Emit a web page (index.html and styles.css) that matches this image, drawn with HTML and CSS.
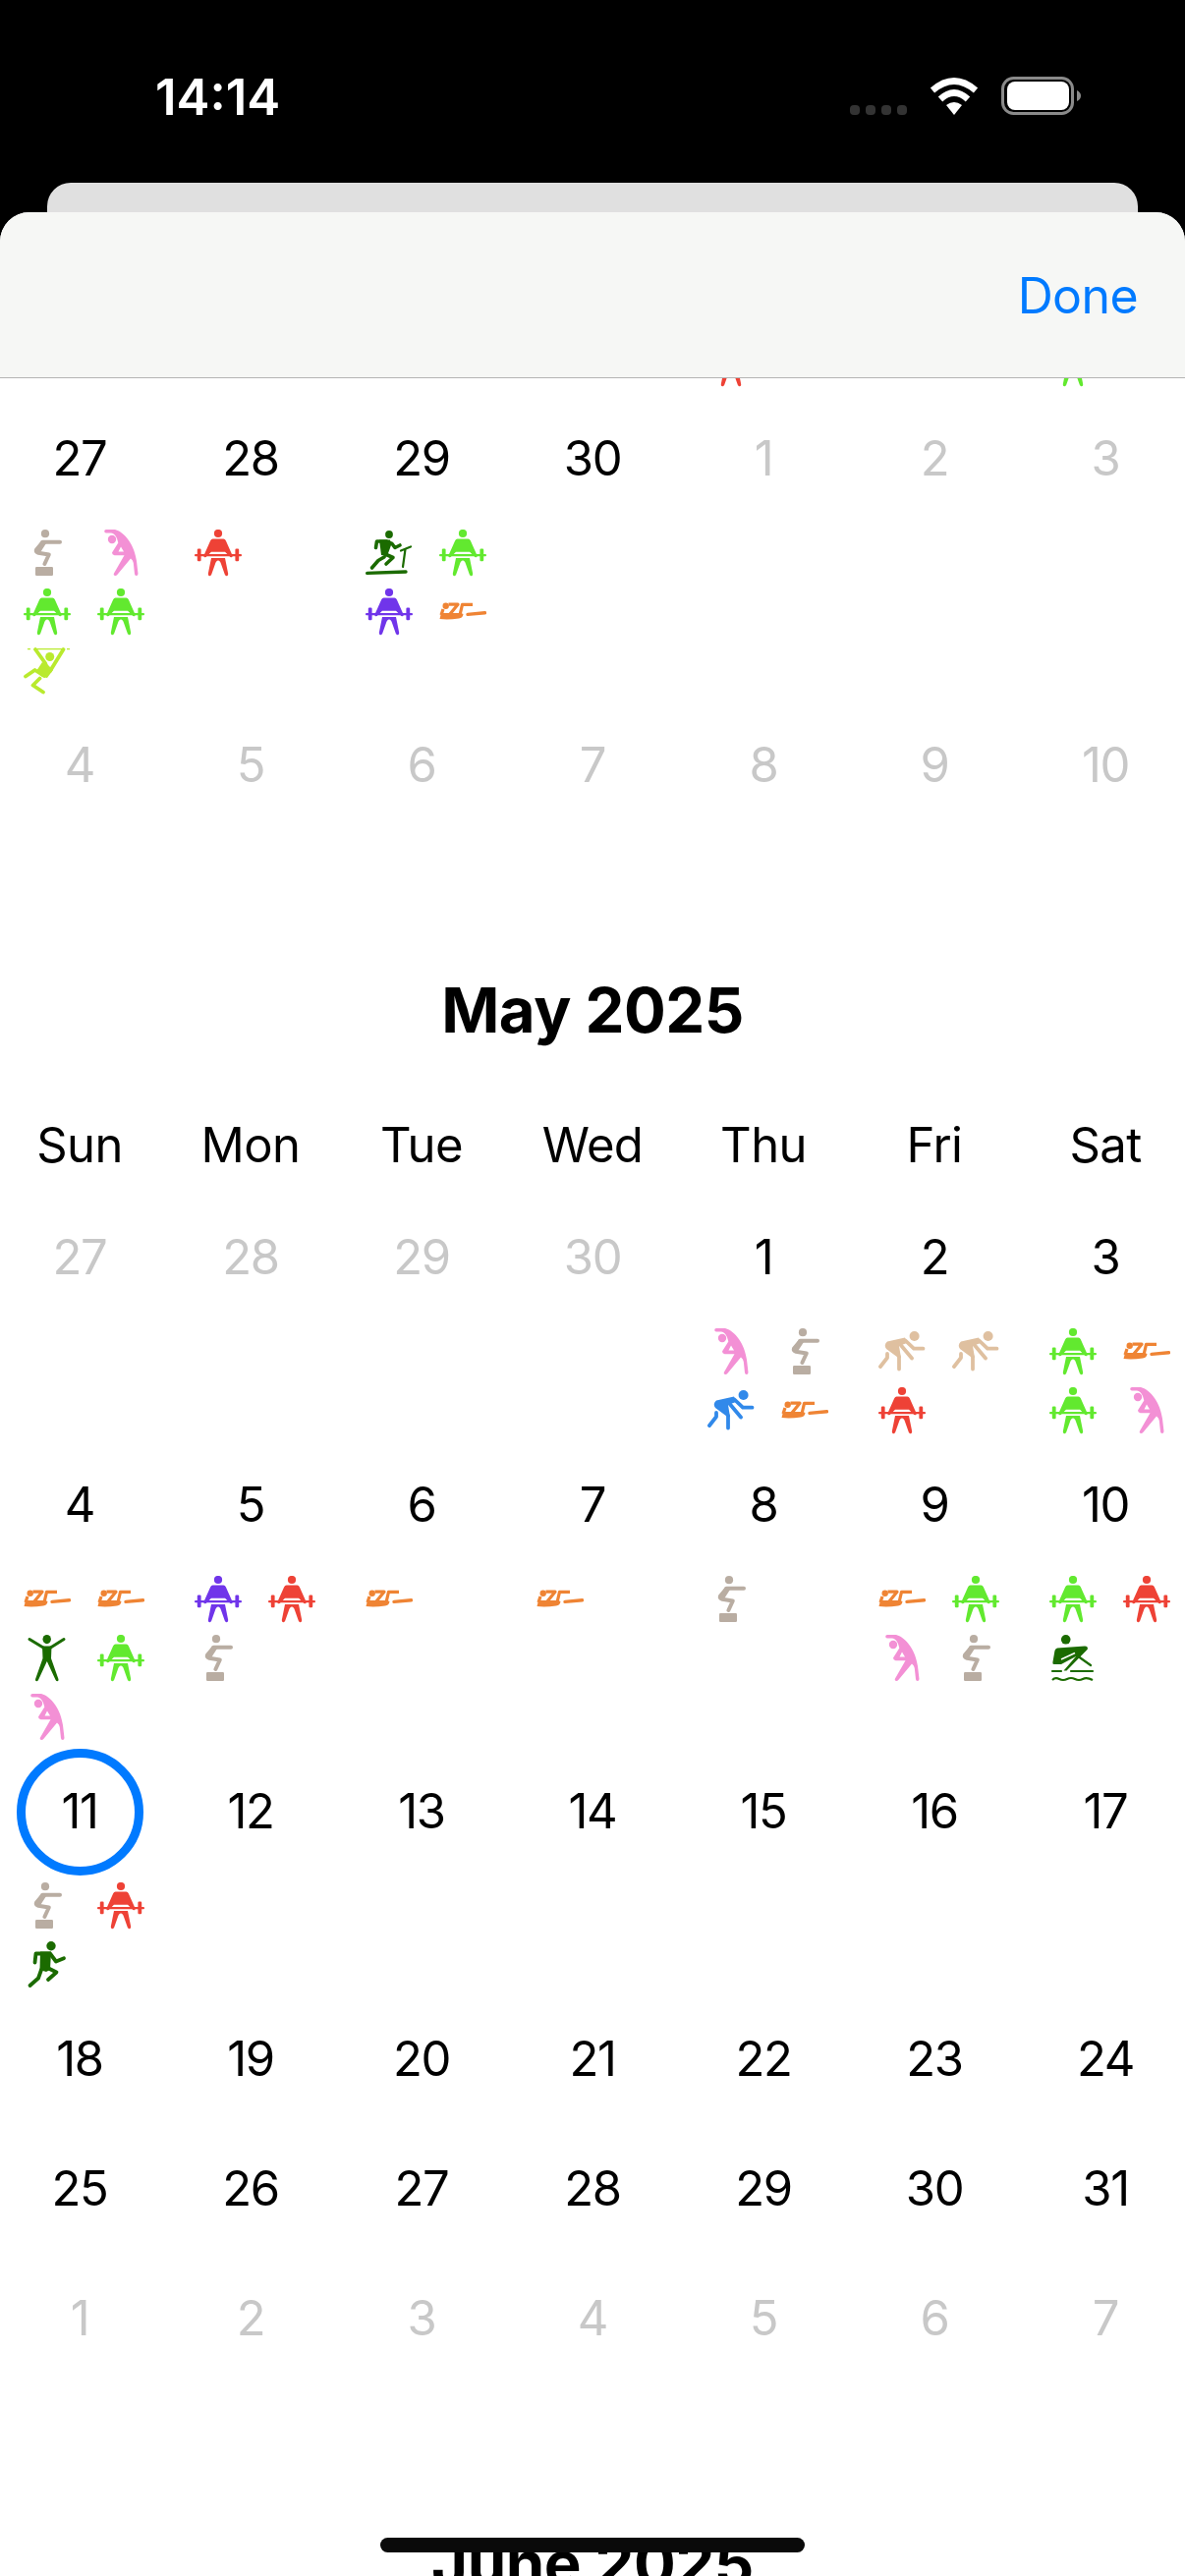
FILE: index.html
```html
<!DOCTYPE html>
<html lang="en">
<head>
<meta charset="utf-8">
<title>Calendar</title>
<link rel="stylesheet" href="styles.css">
</head>
<body>
<svg class="defs" xmlns="http://www.w3.org/2000/svg">
  <symbol id="barbell" viewBox="0 0 48 48">
    <circle cx="24" cy="4" r="4.1" fill="currentColor"/>
    <path d="M18.5 9.6H29.5Q31 9.6 31.8 11.2L38.6 26.4Q39 28 37.5 28.3Q36.2 28.5 35.6 27.2L31 22.8H17L12.4 27.2Q11.8 28.5 10.5 28.3Q9 28 9.4 26.4L16.2 11.2Q17 9.6 18.5 9.6Z" fill="currentColor"/>
    <rect x="0" y="25" width="48" height="2.2" rx="1" fill="currentColor"/>
    <rect x="2.8" y="19.6" width="3.8" height="12.6" rx="1.2" fill="currentColor"/>
    <rect x="41.4" y="19.6" width="3.8" height="12.6" rx="1.2" fill="currentColor"/>
    <path d="M17 29H31L34.2 45Q34.4 47 32.8 47.2Q31.4 47.4 30.8 45.8L27 35Q26 31.5 24 31.5Q22 31.5 21 35L17.2 45.8Q16.6 47.4 15.2 47.2Q13.6 47 13.8 45Z" fill="currentColor"/>
  </symbol>
  <symbol id="stretch" viewBox="0 0 48 48">
    <circle cx="15" cy="10" r="4.2" fill="currentColor"/>
    <path fill-rule="evenodd" d="M9 0H18C29 3 38 17 40 32L41.5 45Q41.5 47 39.7 47Q38.2 47 38 45.2L36.8 34Q36.4 31 34 29.5L20.3 46Q19 47.4 17.5 46.8Q16 46 17 44.4L27.5 26.2H17.5Q15 25.5 15 23.5L21.3 13.5C20 6.5 17 3.6 14 3.4H9Q7.2 3.2 7.2 1.7Q7.2 0 9 0ZM24 17.5L21.5 22.5H27Z" fill="currentColor"/>
  </symbol>
  <symbol id="box" viewBox="0 0 48 48">
    <circle cx="22" cy="4.2" r="4.1" fill="currentColor"/>
    <path d="M37 12.8H19.5L13 20.5Q12 23 15 23.8L25.8 25.5L21.4 35" fill="none" stroke="currentColor" stroke-width="4" stroke-linecap="round" stroke-linejoin="round"/>
    <path d="M18 11L23 14L17.5 22.5L12 22Z" fill="currentColor"/>
    <rect x="12" y="38" width="18" height="9" rx="1.2" fill="currentColor"/>
  </symbol>
  <symbol id="treadmill" viewBox="0 0 48 48">
    <circle cx="24" cy="5" r="3.9" fill="currentColor"/>
    <path d="M1.7 44.4L41 43" stroke="currentColor" stroke-width="3.4" stroke-linecap="round" fill="none"/>
    <path d="M38 38L40.5 20M36 21.5L46 17.5" stroke="currentColor" stroke-width="2.2" stroke-linecap="round" fill="none"/>
    <path d="M10.5 18.5L11.5 12H21L27 14.5L30 18.5L35 16M19 28L13 31.5L6.5 39M20 25L28 28.5L21 35" fill="none" stroke="currentColor" stroke-width="3.6" stroke-linecap="round" stroke-linejoin="round"/>
    <path d="M14 10.5H25L26 16L22 27L16 26Z" fill="currentColor"/>
  </symbol>
  <symbol id="abs" viewBox="0 0 48 48">
    <circle cx="6.7" cy="17.8" r="3.2" fill="currentColor"/>
    <path d="M0.5 31L2 25H22L24.5 26Q24 30 20 30.5Q9 32 0.5 31Z" fill="currentColor"/>
    <path d="M4 21L2 27M9.5 16.2H19L11 26M34 16.4H23.5L21 27" fill="none" stroke="currentColor" stroke-width="3.2" stroke-linejoin="round"/>
    <path d="M29 26.4L46.5 24.8" stroke="currentColor" stroke-width="3.4" stroke-linecap="round" fill="none"/>
  </symbol>
  <symbol id="hang" viewBox="0 0 48 48">
    <path d="M4 1.6H7M11 1.6H41M44 1.6H47" stroke="currentColor" stroke-width="1.4" fill="none"/>
    <circle cx="26.7" cy="9.5" r="4.5" fill="currentColor"/>
    <path d="M12 2L22 16L24 21M40.5 2L27 24" stroke="currentColor" stroke-width="3.8" stroke-linecap="round" fill="none"/>
    <path d="M19 15L25 18L30 23L24 31L19 30Q14 26 13 24Z" fill="currentColor"/>
    <path d="M21 29L11.5 23L2 29.5M16.5 31.5L9.5 38.5L20 45.5" stroke="currentColor" stroke-width="3.8" stroke-linecap="round" stroke-linejoin="round" fill="none"/>
  </symbol>
  <symbol id="run" viewBox="0 0 48 48">
    <circle cx="28" cy="4.7" r="4.7" fill="currentColor"/>
    <path d="M11.5 21.5L12.5 12.5H27L33 20.5L41 17.2M18 29L15 37.5L6.5 45M24.5 27L33.5 31.5L25 39" fill="none" stroke="currentColor" stroke-width="3.8" stroke-linecap="round" stroke-linejoin="round"/>
    <path d="M17 10.5H28L27 29L23 31L16.5 29Z" fill="currentColor"/>
  </symbol>
  <symbol id="jack" viewBox="0 0 48 48">
    <ellipse cx="23.7" cy="4.6" rx="4.2" ry="4.6" fill="currentColor"/>
    <path d="M6 4.5L20 13M41 4.5L27.5 13" stroke="currentColor" stroke-width="3" stroke-linecap="round" fill="none"/>
    <path d="M19 11.5H28.5L28 24L35.5 45.2Q35.8 47 34.4 47.2Q33.2 47.2 32.6 46L23.8 27L15 46Q14.4 47.2 13.2 47.2Q11.8 47 12 45.2L19.5 24Z" fill="currentColor"/>
  </symbol>
  <symbol id="row" viewBox="0 0 48 48">
    <circle cx="16.7" cy="4.8" r="4.8" fill="currentColor"/>
    <path d="M8 13.5L36 11.5Q39.5 11.6 38.8 14.8L17.5 36.5H14.5L27 22L12 30H4.6Q3 30 3.4 28L5.5 16Q6 14 8 13.5Z" fill="currentColor"/>
    <path d="M12 25L26 18.5" stroke="#fff" stroke-width="1.6" fill="none"/>
    <path d="M30 22.5L42 31M3 37H12M22 37H44" stroke="currentColor" stroke-width="2.2" stroke-linecap="round" fill="none"/>
    <path d="M3 46Q6 43 10 45T18 45T26 45T34 45T44 46" stroke="currentColor" stroke-width="2.2" fill="none"/>
  </symbol>
  <symbol id="crouch" viewBox="0 0 48 48">
    <circle cx="36.6" cy="8" r="5" fill="currentColor"/>
    <path d="M27.5 12.5L36 20.7H45.5M21 15L34 30.5M21 29V41.5M9 26V30L2 39" fill="none" stroke="currentColor" stroke-width="3.8" stroke-linecap="round" stroke-linejoin="round"/>
    <path d="M9 13.5L27 9.5L29 15L21 18L23 30L19.5 29.5L8 21Q5 17 9 13.5Z" fill="currentColor"/>
  </symbol>
</svg>

<div class="phone">
  <header class="status">
    <span class="time">14:14</span>
    <div class="status-icons">
      <svg class="st-signal" viewBox="0 0 58 38"><rect x="0" y="28" width="10" height="10" rx="4" /><rect x="16" y="28" width="10" height="10" rx="4"/><rect x="32" y="28" width="10" height="10" rx="4"/><rect x="48" y="28" width="10" height="10" rx="4"/></svg>
      <svg class="st-wifi" viewBox="0 0 50 38"><path d="M3 13Q25 -6 47 13M11 22Q25 9 39 22" fill="none" stroke="#fff" stroke-width="6.5"/><path d="M25 38L17 28Q25 22 33 28Z" fill="#fff"/></svg>
      <svg class="st-batt" viewBox="0 0 81 39"><rect x="1.5" y="1.5" width="71" height="36" rx="11" fill="none" stroke="#8a8a8a" stroke-width="3"/><rect x="6" y="5" width="63" height="29" rx="8" fill="#fff"/><path d="M77 14Q81 16 81 19.5Q81 23 77 25Z" fill="#8a8a8a"/></svg>
    </div>
  </header>
  <div class="card-behind"></div>
  <main class="sheet">
    <nav class="navbar"><a class="done">Done</a></nav>
    <div class="scroll">
      <div class="cut-row">
        <div class="cut-cell"></div><div class="cut-cell"></div><div class="cut-cell"></div><div class="cut-cell"></div>
        <div class="cut-cell"><svg class="ic red"><use href="#barbell"/></svg></div>
        <div class="cut-cell"></div>
        <div class="cut-cell"><svg class="ic green"><use href="#barbell"/></svg></div>
      </div>

      <div class="week">
        <div class="day"><div class="num">27</div><div class="icons">
          <svg class="ic box"><use href="#box"/></svg><svg class="ic pink"><use href="#stretch"/></svg>
          <svg class="ic green"><use href="#barbell"/></svg><svg class="ic green"><use href="#barbell"/></svg>
          <svg class="ic lime"><use href="#hang"/></svg></div></div>
        <div class="day"><div class="num">28</div><div class="icons"><svg class="ic red"><use href="#barbell"/></svg></div></div>
        <div class="day"><div class="num">29</div><div class="icons">
          <svg class="ic dark"><use href="#treadmill"/></svg><svg class="ic green"><use href="#barbell"/></svg>
          <svg class="ic purple"><use href="#barbell"/></svg><svg class="ic orange"><use href="#abs"/></svg></div></div>
        <div class="day"><div class="num">30</div></div>
        <div class="day"><div class="num off">1</div></div>
        <div class="day"><div class="num off">2</div></div>
        <div class="day"><div class="num off">3</div></div>
      </div>
      <div class="week">
        <div class="day"><div class="num off">4</div></div>
        <div class="day"><div class="num off">5</div></div>
        <div class="day"><div class="num off">6</div></div>
        <div class="day"><div class="num off">7</div></div>
        <div class="day"><div class="num off">8</div></div>
        <div class="day"><div class="num off">9</div></div>
        <div class="day"><div class="num off">10</div></div>
      </div>

      <h2 class="month">May 2025</h2>
      <div class="weekdays"><span>Sun</span><span>Mon</span><span>Tue</span><span>Wed</span><span>Thu</span><span>Fri</span><span>Sat</span></div>

      <div class="week">
        <div class="day"><div class="num off">27</div></div>
        <div class="day"><div class="num off">28</div></div>
        <div class="day"><div class="num off">29</div></div>
        <div class="day"><div class="num off">30</div></div>
        <div class="day"><div class="num">1</div><div class="icons">
          <svg class="ic pink"><use href="#stretch"/></svg><svg class="ic box"><use href="#box"/></svg>
          <svg class="ic blue"><use href="#crouch"/></svg><svg class="ic orange"><use href="#abs"/></svg></div></div>
        <div class="day"><div class="num">2</div><div class="icons">
          <svg class="ic tan"><use href="#crouch"/></svg><svg class="ic tan"><use href="#crouch"/></svg>
          <svg class="ic red"><use href="#barbell"/></svg></div></div>
        <div class="day"><div class="num">3</div><div class="icons">
          <svg class="ic green"><use href="#barbell"/></svg><svg class="ic orange"><use href="#abs"/></svg>
          <svg class="ic green"><use href="#barbell"/></svg><svg class="ic pink"><use href="#stretch"/></svg></div></div>
      </div>
      <div class="week">
        <div class="day"><div class="num">4</div><div class="icons">
          <svg class="ic orange"><use href="#abs"/></svg><svg class="ic orange"><use href="#abs"/></svg>
          <svg class="ic dark"><use href="#jack"/></svg><svg class="ic green"><use href="#barbell"/></svg>
          <svg class="ic pink"><use href="#stretch"/></svg></div></div>
        <div class="day"><div class="num">5</div><div class="icons">
          <svg class="ic purple"><use href="#barbell"/></svg><svg class="ic red"><use href="#barbell"/></svg>
          <svg class="ic box"><use href="#box"/></svg></div></div>
        <div class="day"><div class="num">6</div><div class="icons"><svg class="ic orange"><use href="#abs"/></svg></div></div>
        <div class="day"><div class="num">7</div><div class="icons"><svg class="ic orange"><use href="#abs"/></svg></div></div>
        <div class="day"><div class="num">8</div><div class="icons"><svg class="ic box"><use href="#box"/></svg></div></div>
        <div class="day"><div class="num">9</div><div class="icons">
          <svg class="ic orange"><use href="#abs"/></svg><svg class="ic green"><use href="#barbell"/></svg>
          <svg class="ic pink"><use href="#stretch"/></svg><svg class="ic box"><use href="#box"/></svg></div></div>
        <div class="day"><div class="num">10</div><div class="icons">
          <svg class="ic green"><use href="#barbell"/></svg><svg class="ic red"><use href="#barbell"/></svg>
          <svg class="ic dark"><use href="#row"/></svg></div></div>
      </div>
      <div class="week">
        <div class="day"><div class="num today">11</div><div class="icons">
          <svg class="ic box"><use href="#box"/></svg><svg class="ic red"><use href="#barbell"/></svg>
          <svg class="ic dark"><use href="#run"/></svg></div></div>
        <div class="day"><div class="num">12</div></div>
        <div class="day"><div class="num">13</div></div>
        <div class="day"><div class="num">14</div></div>
        <div class="day"><div class="num">15</div></div>
        <div class="day"><div class="num">16</div></div>
        <div class="day"><div class="num">17</div></div>
      </div>
      <div class="week">
        <div class="day"><div class="num">18</div></div>
        <div class="day"><div class="num">19</div></div>
        <div class="day"><div class="num">20</div></div>
        <div class="day"><div class="num">21</div></div>
        <div class="day"><div class="num">22</div></div>
        <div class="day"><div class="num">23</div></div>
        <div class="day"><div class="num">24</div></div>
      </div>
      <div class="week">
        <div class="day"><div class="num">25</div></div>
        <div class="day"><div class="num">26</div></div>
        <div class="day"><div class="num">27</div></div>
        <div class="day"><div class="num">28</div></div>
        <div class="day"><div class="num">29</div></div>
        <div class="day"><div class="num">30</div></div>
        <div class="day"><div class="num">31</div></div>
      </div>
      <div class="week">
        <div class="day"><div class="num off">1</div></div>
        <div class="day"><div class="num off">2</div></div>
        <div class="day"><div class="num off">3</div></div>
        <div class="day"><div class="num off">4</div></div>
        <div class="day"><div class="num off">5</div></div>
        <div class="day"><div class="num off">6</div></div>
        <div class="day"><div class="num off">7</div></div>
      </div>

      <h2 class="month">June 2025</h2>
    </div>
  </main>
  <div class="home-bar"></div>
</div>
</body>
</html>
```
FILE: styles.css
```css
*, *::after { box-sizing: border-box; }
html, body { margin: 0; padding: 0; background: #000; }
body { font-family: Inter, "Liberation Sans", sans-serif; color: #000; }
.defs { display: none; }

.phone {
  position: relative;
  width: 1206px;
  height: 2622px;
  overflow: hidden;
  background: #000;
}

.status {
  display: flex;
  justify-content: space-between;
  align-items: flex-start;
  height: 186px;
  padding: 71px 106px 0 158px;
}
.time {
  color: #fff;
  font-size: 51px;
  line-height: 56px;
  font-weight: 600;
}
.status-icons { display: flex; align-items: center; gap: 23px; padding-top: 7px; }
.st-signal { width: 58px; height: 38px; fill: #333; }
.st-wifi { width: 50px; height: 38px; }
.st-batt { width: 81px; height: 39px; }

.card-behind {
  height: 30px;
  margin: 0 48px;
  background: #e0e0e0;
  border-radius: 24px 24px 0 0;
}

.sheet {
  height: 2406px;
  background: #fff;
  border-radius: 30px 30px 0 0;
  overflow: hidden;
}
.navbar {
  display: flex;
  justify-content: flex-end;
  align-items: center;
  height: 169px;
  padding: 2px 48px 0 0;
  background: #f6f7f5;
  border-bottom: 1px solid #b4b4b4;
}
.done { color: #007aff; font-size: 50px; line-height: 60px; letter-spacing: -0.6px; }

.scroll { width: 1218px; margin-left: -6px; }

.cut-row {
  display: grid;
  grid-template-columns: repeat(7, 174px);
  height: 16px;
  overflow: hidden;
}
.cut-cell { display: flex; align-items: flex-end; padding: 0 0 7px 30px; height: 16px; }
.cut-cell .ic { flex: none; }

.week { display: grid; grid-template-columns: repeat(7, 174px); align-items: start; }
.day { display: flex; flex-direction: column; }
.num {
  position: relative;
  height: 132px;
  line-height: 132px;
  text-align: center;
  font-size: 49px;
  letter-spacing: -1.4px;
}
.num.off { color: #c8c8c8; }
.num.today::after {
  content: "";
  position: absolute;
  left: 23px;
  top: 2px;
  width: 129px;
  height: 129px;
  border: 9px solid #007aff;
  border-radius: 50%;
}

.icons {
  display: grid;
  grid-template-columns: repeat(2, 48px);
  grid-auto-rows: 48px;
  gap: 12px 27px;
  margin: 6px 0 6px 30px;
}
.ic { display: block; width: 48px; height: 48px; }
.green { color: #62e92f; }
.red { color: #ee4236; }
.purple { color: #7035ea; }
.orange { color: #ef8434; }
.pink { color: #f390d5; }
.box { color: #b9ada2; }
.lime { color: #b9ea2e; }
.dark { color: #1b6b00; }
.blue { color: #3189ea; }
.tan { color: #dfc0a0; }

.month {
  margin: 143px 0 58px;
  height: 80px;
  line-height: 80px;
  text-align: center;
  font-size: 63.5px;
  font-weight: 700;
  letter-spacing: -0.5px;
}
.weekdays {
  display: grid;
  grid-template-columns: repeat(7, 174px);
  height: 80px;
  margin-bottom: 8px;
  line-height: 80px;
  text-align: center;
  font-size: 49px;
  letter-spacing: -0.6px;
}

.home-bar {
  position: absolute;
  left: 387px;
  top: 2583px;
  width: 432px;
  height: 15px;
  border-radius: 8px;
  background: #0a0a0a;
}
```
